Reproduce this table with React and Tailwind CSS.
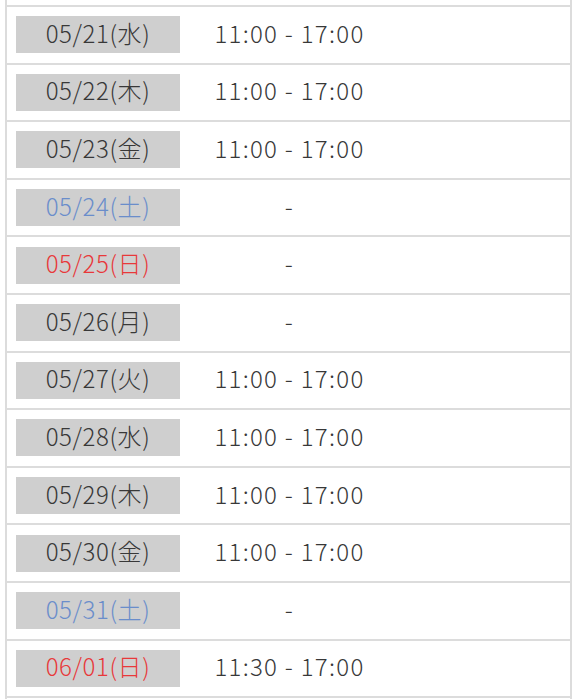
const rows = [
  { date: "05/21(水)", time: "11:00 - 17:00" },
  { date: "05/22(木)", time: "11:00 - 17:00" },
  { date: "05/23(金)", time: "11:00 - 17:00" },
  { date: "05/24(土)", time: "-", tone: "sat" },
  { date: "05/25(日)", time: "-", tone: "sun" },
  { date: "05/26(月)", time: "-" },
  { date: "05/27(火)", time: "11:00 - 17:00" },
  { date: "05/28(水)", time: "11:00 - 17:00" },
  { date: "05/29(木)", time: "11:00 - 17:00" },
  { date: "05/30(金)", time: "11:00 - 17:00" },
  { date: "05/31(土)", time: "-", tone: "sat" },
  { date: "06/01(日)", time: "11:30 - 17:00", tone: "sun" },
];

const toneClass = {
  sat: "text-[#6a8dcb]",
  sun: "text-[#e8383a]",
};

function ScheduleRow({ date, time, tone }) {
  return (
    <div className="flex h-[57.6px] items-center border-t-2 border-[#dcdcdc]">
      <div
        className={`ml-[9px] flex h-[37px] w-[164px] items-center justify-center bg-[#cfcfcf] pb-[4px] tracking-[0.6px] ${
          toneClass[tone] || "text-[#383838]"
        }`}
      >
        {date}
      </div>
      <div className="w-[218px] pb-[4px] pl-[1px] text-center tracking-[1.3px] text-[#383838]">{time}</div>
    </div>
  );
}

export default function App() {
  return (
    <div
      className="h-[699px] w-[576px] overflow-hidden bg-white text-[24px] font-light leading-none"
      style={{ fontFamily: '"Noto Sans CJK JP", "Noto Sans", sans-serif' }}
    >
      <div className="ml-[5px] mr-[4px] h-full border-x-2 border-[#dcdcdc]">
        <div className="h-[5px]" />
        {rows.map((r) => (
          <ScheduleRow key={r.date} {...r} />
        ))}
        <div className="border-t-2 border-[#dcdcdc]" />
      </div>
    </div>
  );
}
